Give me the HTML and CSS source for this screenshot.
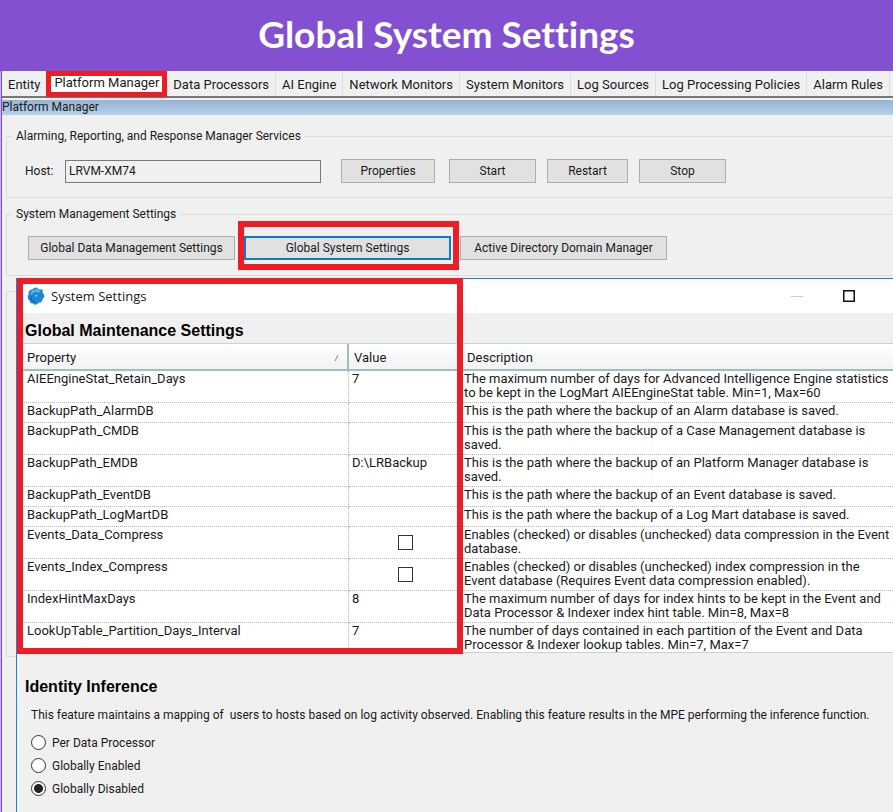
FILE: index.html
```html
<!DOCTYPE html>
<html lang="en">
<head>
<meta charset="utf-8">
<title>Global System Settings</title>
<link rel="stylesheet" href="styles.css">
</head>
<body>
<header class="banner"><h1>Global System Settings</h1></header>
<main class="app">
  <nav class="tabs">
    <a href="#">Entity</a>
    <a href="#" class="active" aria-current="page">Platform Manager</a>
    <a href="#">Data Processors</a>
    <a href="#">AI Engine</a>
    <a href="#">Network Monitors</a>
    <a href="#">System Monitors</a>
    <a href="#">Log Sources</a>
    <a href="#">Log Processing Policies</a>
    <a href="#">Alarm Rules</a>
  </nav>
  <h2 class="pane-title">Platform Manager</h2>

  <fieldset class="group services">
    <legend>Alarming, Reporting, and Response Manager Services</legend>
    <div class="row">
      <label for="host">Host:</label>
      <input id="host" type="text" value="LRVM-XM74" readonly>
      <button type="button" class="btn wide">Properties</button>
      <button type="button" class="btn">Start</button>
      <button type="button" class="btn narrow">Restart</button>
      <button type="button" class="btn">Stop</button>
    </div>
  </fieldset>

  <fieldset class="group management">
    <legend>System Management Settings</legend>
    <div class="row">
      <button type="button" class="btn">Global Data Management Settings</button>
      <span class="marked"><button type="button" class="btn focused">Global System Settings</button></span>
      <button type="button" class="btn">Active Directory Domain Manager</button>
    </div>
  </fieldset>

  <div class="workspace">
    <section class="dialog">
      <div class="maintenance">
        <div class="titlebar">
          <svg class="gear" viewBox="0 0 18 18" width="18" height="18" aria-hidden="true">
            <path d="M7 1l3-.5 1 1.500 2 .5 2-.2 1 2-.5 1.500 1.500 1.500.3 3-1.500 1.200-.5 2-1.500 2-2 .2-1.500 1.600-3 .4-1.400-1.300-2.400-.4-.8-2.200L1 12 .6 9l1-1.500L1.500 5l1.500-2 2-.5z" fill="#1e88d8"/>
            <path d="M5 3.500l4-1.500 3 1 1.500 2-3 .5-2-1-3 2-2.500 1.500z" fill="#5bb4ee"/>
            <path d="M2.500 9l2 .5 1 3 3 1.500-1 2-3-1.500z" fill="#0f6dbb"/>
            <circle cx="9" cy="9" r="2.500" fill="#2f9ae2" stroke="#1a78c4"/>
            <circle cx="9.500" cy="8.500" r="1" fill="#7cc3f2"/>
          </svg>
          <span class="caption">System Settings</span>
          <button type="button" class="winbtn" aria-label="Minimize"><svg viewBox="0 0 12 12" width="12" height="12"><path d="M0 6.500h12" stroke="#ccc"/></svg></button>
          <button type="button" class="winbtn" aria-label="Maximize"><svg viewBox="0 0 12 12" width="12" height="12"><rect x=".75" y=".75" width="10.500" height="10.500" fill="none" stroke="#111" stroke-width="1.500"/></svg></button>
        </div>
        <h3>Global Maintenance Settings</h3>
        <table>
          <colgroup><col class="c-prop"><col class="c-val"><col></colgroup>
          <thead><tr>
            <th><span class="sort">Property<svg viewBox="0 0 8 8" width="8" height="8" aria-hidden="true"><path d="M1 7L4 1" stroke="#888" fill="none"/><path d="M4 1l3.500 6.500H1" stroke="#eee" fill="none"/></svg></span></th>
            <th>Value</th><th>Description</th></tr></thead>
          <tbody>
            <tr><td>AIEEngineStat_Retain_Days</td><td>7</td><td>The maximum number of days for Advanced Intelligence Engine statistics<br>to be kept in the LogMart AIEEngineStat table. Min=1, Max=60</td></tr>
            <tr><td>BackupPath_AlarmDB</td><td></td><td>This is the path where the backup of an Alarm database is saved.</td></tr>
            <tr><td>BackupPath_CMDB</td><td></td><td>This is the path where the backup of a Case Management database is<br>saved.</td></tr>
            <tr><td>BackupPath_EMDB</td><td>D:\LRBackup</td><td>This is the path where the backup of an Platform Manager database is<br>saved.</td></tr>
            <tr><td>BackupPath_EventDB</td><td></td><td>This is the path where the backup of an Event database is saved.</td></tr>
            <tr><td>BackupPath_LogMartDB</td><td></td><td>This is the path where the backup of a Log Mart database is saved.</td></tr>
            <tr><td>Events_Data_Compress</td><td class="check"><input type="checkbox" aria-label="Events_Data_Compress"></td><td>Enables (checked) or disables (unchecked) data compression in the Event<br>database.</td></tr>
            <tr><td>Events_Index_Compress</td><td class="check"><input type="checkbox" aria-label="Events_Index_Compress"></td><td>Enables (checked) or disables (unchecked) index compression in the<br>Event database (Requires Event data compression enabled).</td></tr>
            <tr><td>IndexHintMaxDays</td><td>8</td><td>The maximum number of days for index hints to be kept in the Event and<br>Data Processor &amp; Indexer index hint table. Min=8, Max=8</td></tr>
            <tr><td>LookUpTable_Partition_Days_Interval</td><td>7</td><td>The number of days contained in each partition of the Event and Data<br>Processor &amp; Indexer lookup tables. Min=7, Max=7</td></tr>
          </tbody>
        </table>
      </div>
      <div class="identity">
        <h3>Identity Inference</h3>
        <p>This feature maintains a mapping of &nbsp;users to hosts based on log activity observed. Enabling this feature results in the MPE performing the inference function.</p>
        <label><input type="radio" name="mode">Per Data Processor</label>
        <label><input type="radio" name="mode">Globally Enabled</label>
        <label><input type="radio" name="mode" checked>Globally Disabled</label>
      </div>
    </section>
  </div>
</main>
</body>
</html>
```
FILE: styles.css
```css
*, *::before, *::after { box-sizing: border-box; }

body {
  margin: 0;
  min-height: 100vh;
  display: flex;
  flex-direction: column;
  background: #f0f0f0;
  color: #1a1a1a;
  font: 12px/16px Roboto, "Liberation Sans", sans-serif;
  overflow-x: hidden;
}

button, input { font: inherit; color: inherit; }

.banner {
  height: 71px;
  padding-bottom: 3px;
  background: #8250d0;
  color: #fff;
  display: flex;
  align-items: center;
  justify-content: center;
}
.banner h1 {
  margin: 0;
  font: bold 37px/44px Lato, sans-serif;
  font-variant-ligatures: none;
}

.app {
  flex: 1;
  display: flex;
  flex-direction: column;
  padding-left: 1px;
  border-left: 1px solid #c4b2e2;
  box-shadow: inset 1px 0 #7c4fc8;
}

.tabs {
  display: flex;
  height: 27px;
  padding-top: 2px;
  border-bottom: 2px solid #777;
  font-size: 13px;
  white-space: nowrap;
}
.tabs a {
  position: relative;
  flex: 0 0 auto;
  height: 23px;
  padding: 4px 6px 0;
  border-right: 1px solid #dcdcdc;
  color: inherit;
  text-decoration: none;
}
.tabs a:first-child { border: 0; }
.tabs .active { padding: 2px 8px 0; border: 0; background: #fff; }
.tabs .active::after {
  content: "";
  position: absolute;
  inset: -2px 0 -1px 0;
  border: 5px solid #ee1c25;
}

.pane-title {
  margin: 2px 0 0;
  height: 15px;
  font: inherit;
  font-size: 12px;
  line-height: 14px;
  background: linear-gradient(#98b3d3, #b5d0ec);
}

.group {
  margin: 0 0 0 4px;
  padding: 0;
  min-width: 0;
  border: 1px solid #dcdcdc;
  border-right: 0;
}
.group legend { margin-left: 5px; padding: 0 4px; }
.services { margin-top: 13px; height: 70px; }
.management { margin-top: 8px; height: 70px; }
.row { display: flex; align-items: center; }
.services .row { padding: 15px 18px 0; gap: 11px; }
.services label { width: 29px; }
.management .row { padding: 14px 21px 0; gap: 9px; }

input[type="text"] {
  width: 256px;
  height: 23px;
  margin-right: 9px;
  padding: 0 3px;
  border: 1px solid #7a7a7a;
  background: #f0f0f0;
  border-radius: 0;
}
.btn {
  height: 24px;
  width: 87px;
  padding: 0;
  border: 1px solid #adadad;
  background: #e1e1e1;
  white-space: nowrap;
}
.btn.wide { width: 94px; margin-right: 3px; }
.btn.narrow { width: 81px; }
.management .btn { width: 207px; }
.management .focused { border: 2px solid #0f78d4; }
.marked { position: relative; display: flex; }
.marked::after {
  content: "";
  position: absolute;
  inset: -15px -8px -10px -6px;
  border: 6px solid #ee1c25;
}

.workspace {
  position: relative;
  flex: 1;
  display: flex;
  margin-top: 2px;
  padding-left: 14px;
}
.workspace::before {
  content: "";
  position: absolute;
  left: 4px;
  top: 13px;
  width: 10px;
  height: 366px;
  border: 1px solid #dcdcdc;
  border-right: 0;
}
.dialog {
  flex: 1;
  min-width: 0;
  background: #f0f0f0;
  border: 1px solid #1883d7;
  border-width: 1px 0 0 1px;
}
.maintenance { position: relative; }
.maintenance::after {
  content: "";
  position: absolute;
  top: -1px;
  bottom: -1px;
  left: 0;
  width: 446px;
  border: 6px solid #ee1c25;
}
.titlebar {
  display: flex;
  align-items: center;
  height: 34px;
  padding: 0 38px 0 10px;
  background: #fff;
  font-family: "Open Sans", sans-serif;
  font-size: 13px;
}
.caption { margin: 0 auto 0 6px; }
.winbtn { display: flex; margin-left: 40px; padding: 0; border: 0; background: none; }

h3 { margin: 0; padding-left: 8px; color: #000; font: bold 16px/18px "Liberation Sans", sans-serif; }
.maintenance h3 { padding-top: 9px; height: 30px; }

table {
  width: 100%;
  table-layout: fixed;
  border-collapse: separate;
  border-spacing: 0;
  background: #fff;
  border-top: 1px solid #c3d3e2;
  border-bottom: 1px solid #c3d3e2;
  font-size: 13px;
  line-height: 14px;
  white-space: nowrap;
}
.c-prop { width: 332px; }
.c-val { width: 114px; }
th {
  height: 27px;
  padding: 2px 5px 0;
  text-align: left;
  font-weight: normal;
  background: linear-gradient(#fff, #f1f2f3);
  border-bottom: 2px solid #a5bcbc;
}
th:first-child { padding-left: 10px; border-right: 2px solid #a5bcbc; }
.sort { display: flex; align-items: center; justify-content: space-between; }
td {
  vertical-align: top;
  padding: 1px 0 2px 3px;
  border-bottom: 1px dotted #b8b8b8;
}
td:first-child { padding-left: 10px; border-right: 1px dotted #b8b8b8; }
td:last-child { padding-left: 1px; }
th:last-child { padding-left: 4px; }
tbody tr { height: 20px; }
tbody tr:last-child td { padding-bottom: 0; border-bottom: 0; }
.check { padding-right: 5px; text-align: center; vertical-align: middle; }

input[type="checkbox"], input[type="radio"] {
  appearance: none;
  display: inline-block;
  width: 15px;
  height: 15px;
  margin: 0;
  border: 1px solid #333;
  background: #fff;
  vertical-align: middle;
}
td input[type="checkbox"] { display: block; margin: 0 auto; }
input[type="radio"] { border-radius: 50%; }
input[type="radio"]:checked { background: radial-gradient(circle, #222 4px, #fff 5px); }

.identity { padding-top: 25px; }
.identity p { margin: 11px 0 8px 14px; white-space: nowrap; }
.identity label { display: flex; align-items: center; gap: 6px; height: 23px; padding-left: 14px; }
```
